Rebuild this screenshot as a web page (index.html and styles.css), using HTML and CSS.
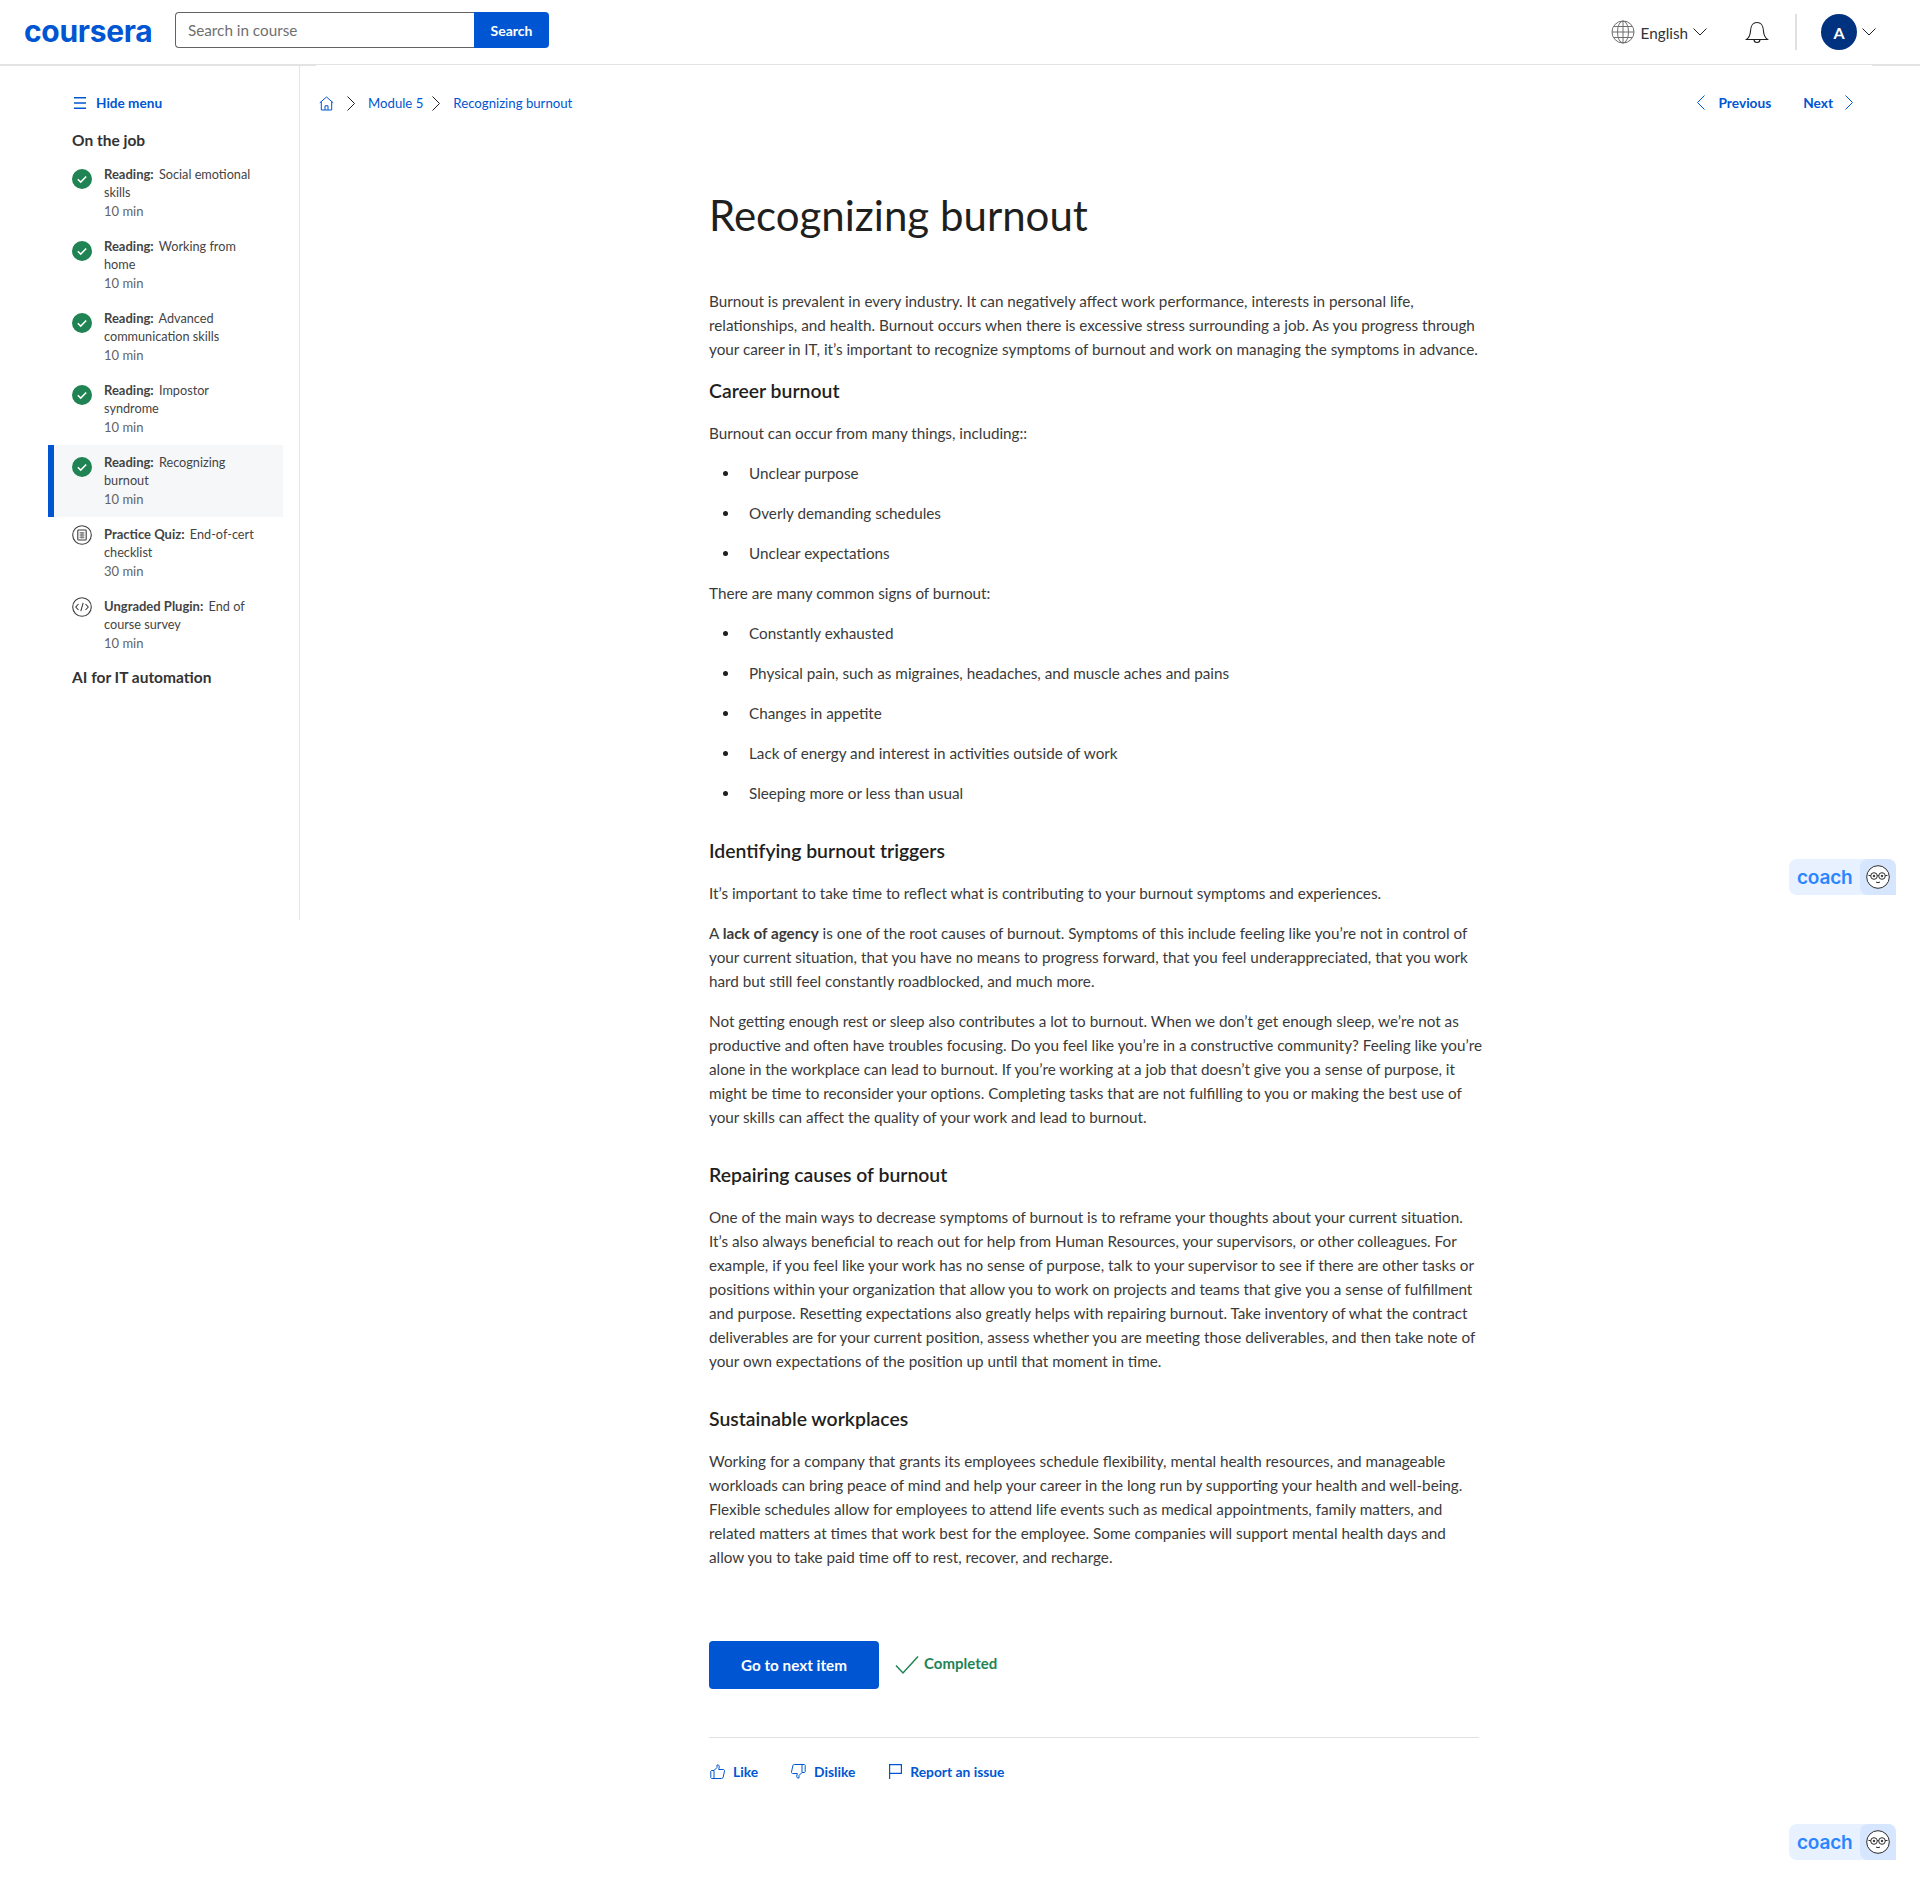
FILE: index.html
```html
<!DOCTYPE html>
<html lang="en">
<head>
    <meta charset="UTF-8">
    <title>Recognizing burnout | Coursera</title>
    <link rel="stylesheet" href="styles.css">
</head>
<body>
    <header class="topbar">
        <a class="logo">coursera</a>
        <div class="search">
            <input class="search-input" type="text" placeholder="Search in course">
            <button class="search-btn">Search</button>
        </div>
        <div class="topbar-right">
            <svg class="globe" width="24" height="24" viewBox="0 0 24 24" fill="none" stroke="#6f6f6f" stroke-width="1">
                <circle cx="12" cy="12" r="11"/>
                <ellipse cx="12" cy="12" rx="5.5" ry="11"/>
                <path d="M12 1v22M1 12h22M2.6 6.5h18.8M2.6 17.5h18.8"/>
            </svg>
            <span class="lang">English</span>
            <svg class="caret" width="14" height="8" viewBox="0 0 14 8" fill="none" stroke="#1f1f1f"><path d="M.5.5 7 7 13.5.5"/></svg>
            <svg class="bell" width="24" height="26" viewBox="0 0 24 26" fill="none" stroke="#1f1f1f" stroke-width="1.1">
                <path d="M1.5 20.5c2.6-2 3.6-4 3.9-7.500.3-3.200.3-9.500 6.600-9.500s6.300 6.300 6.600 9.500c.3 3.500 1.300 5.500 3.900 7.500z"/>
                <path d="M9 20.500a3 3 0 0 0 6 0"/>
            </svg>
            <div class="divider"></div>
            <div class="avatar">A</div>
            <svg class="caret" width="14" height="8" viewBox="0 0 14 8" fill="none" stroke="#1f1f1f"><path d="M.5.5 7 7 13.500.5"/></svg>
        </div>
    </header>

    <div class="page">
        <aside class="sidebar">
            <a class="hide-menu">
                <svg width="12" height="12" viewBox="0 0 12 12" fill="#0056d2"><path d="M0 0h12v1.600H0zM0 5.200h12v1.600H0zM0 10.400h12V12H0z"/></svg>
                <span>Hide menu</span>
            </a>
            <h3 class="side-title">On the job</h3>
            <ul class="items">
                <li class="item">
                    <svg class="item-icon" width="20" height="20" viewBox="0 0 20 20"><circle cx="10" cy="10" r="10" fill="#1f8354"/><path d="M5.800 10.300l2.900 2.800 5.500-5.700" fill="none" stroke="#fff" stroke-width="1.500"/></svg>
                    <div><div class="item-name"><b>Reading:</b> Social emotional<br>skills</div><div class="item-time">10 min</div></div>
                </li>
                <li class="item">
                    <svg class="item-icon" width="20" height="20" viewBox="0 0 20 20"><circle cx="10" cy="10" r="10" fill="#1f8354"/><path d="M5.800 10.300l2.900 2.800 5.500-5.700" fill="none" stroke="#fff" stroke-width="1.500"/></svg>
                    <div><div class="item-name"><b>Reading:</b> Working from<br>home</div><div class="item-time">10 min</div></div>
                </li>
                <li class="item">
                    <svg class="item-icon" width="20" height="20" viewBox="0 0 20 20"><circle cx="10" cy="10" r="10" fill="#1f8354"/><path d="M5.800 10.300l2.900 2.800 5.500-5.700" fill="none" stroke="#fff" stroke-width="1.500"/></svg>
                    <div><div class="item-name"><b>Reading:</b> Advanced<br>communication skills</div><div class="item-time">10 min</div></div>
                </li>
                <li class="item">
                    <svg class="item-icon" width="20" height="20" viewBox="0 0 20 20"><circle cx="10" cy="10" r="10" fill="#1f8354"/><path d="M5.800 10.300l2.900 2.800 5.500-5.700" fill="none" stroke="#fff" stroke-width="1.500"/></svg>
                    <div><div class="item-name"><b>Reading:</b> Impostor<br>syndrome</div><div class="item-time">10 min</div></div>
                </li>
                <li class="item selected">
                    <svg class="item-icon" width="20" height="20" viewBox="0 0 20 20"><circle cx="10" cy="10" r="10" fill="#1f8354"/><path d="M5.800 10.300l2.900 2.800 5.500-5.700" fill="none" stroke="#fff" stroke-width="1.500"/></svg>
                    <div><div class="item-name"><b>Reading:</b> Recognizing<br>burnout</div><div class="item-time">10 min</div></div>
                </li>
                <li class="item">
                    <svg class="item-icon todo" width="20" height="20" viewBox="0 0 20 20" fill="none" stroke="#3d3d3d"><circle cx="10" cy="10" r="9.300" stroke-width="1.100"/><rect x="5.800" y="5" width="8.400" height="10" rx=".8" stroke-width="1.100"/><path d="M7.500 7.800h5M7.500 10h5M7.500 12.300h5M9.200 7v6.500M10.900 7v6.500" stroke="#777" stroke-width="1"/></svg>
                    <div><div class="item-name"><b>Practice Quiz:</b> End-of-cert<br>checklist</div><div class="item-time">30 min</div></div>
                </li>
                <li class="item">
                    <svg class="item-icon todo" width="20" height="20" viewBox="0 0 20 20" fill="none" stroke="#3d3d3d" stroke-width="1.100"><circle cx="10" cy="10" r="9.300"/><path d="M6.500 7 3.800 10l2.700 3M13.500 7l2.700 3-2.700 3M11.200 5.800 8.800 14.200"/></svg>
                    <div><div class="item-name"><b>Ungraded Plugin:</b> End of<br>course survey</div><div class="item-time">10 min</div></div>
                </li>
            </ul>
            <h3 class="side-title next-module">AI for IT automation</h3>
        </aside>

        <main class="content">
            <div class="navrow">
                <nav class="crumbs">
                    <svg width="15" height="15" viewBox="0 0 15 15" fill="none" stroke="#0056d2"><path d="M.8 6.800 7.500 1l6.700 5.800M2.300 5.800V14h10.400V5.800M6 14V9.800h3V14"/></svg>
                    <svg class="chev" width="8" height="15" viewBox="0 0 8 15" fill="none" stroke="#1f1f1f"><path d="M.5.500 7.500 7.500.5 14.500"/></svg>
                    <a>Module 5</a>
                    <svg class="chev chev-mid" width="8" height="15" viewBox="0 0 8 15" fill="none" stroke="#1f1f1f"><path d="M.5.500 7.500 7.500.5 14.500"/></svg>
                    <a>Recognizing burnout</a>
                </nav>
                <div class="prevnext">
                    <svg width="8" height="15" viewBox="0 0 8 15" fill="none" stroke="#0056d2"><path d="M7.500.500.500 7.500l7 7"/></svg>
                    <a class="prev">Previous</a>
                    <a class="next">Next</a>
                    <svg width="8" height="15" viewBox="0 0 8 15" fill="none" stroke="#0056d2"><path d="M.5.500 7.500 7.500.5 14.500"/></svg>
                </div>
            </div>

            <article class="reading">
                <h1>Recognizing burnout</h1>
                <p>Burnout is prevalent in every industry. It can negatively affect work performance, interests in personal life,<br>relationships, and health. Burnout occurs when there is excessive stress surrounding a job. As you progress through<br>your career in IT, it’s important to recognize symptoms of burnout and work on managing the symptoms in advance.</p>
                <h2 class="first">Career burnout</h2>
                <p>Burnout can occur from many things, including::</p>
                <ul>
                    <li>Unclear purpose</li>
                    <li>Overly demanding schedules</li>
                    <li>Unclear expectations</li>
                </ul>
                <p>There are many common signs of burnout:</p>
                <ul>
                    <li>Constantly exhausted</li>
                    <li>Physical pain, such as migraines, headaches, and muscle aches and pains</li>
                    <li>Changes in appetite</li>
                    <li>Lack of energy and interest in activities outside of work</li>
                    <li>Sleeping more or less than usual</li>
                </ul>
                <h2>Identifying burnout triggers</h2>
                <p>It’s important to take time to reflect what is contributing to your burnout symptoms and experiences.</p>
                <p>A <b>lack of agency</b> is one of the root causes of burnout. Symptoms of this include feeling like you’re not in control of<br>your current situation, that you have no means to progress forward, that you feel underappreciated, that you work<br>hard but still feel constantly roadblocked, and much more.</p>
                <p>Not getting enough rest or sleep also contributes a lot to burnout. When we don’t get enough sleep, we’re not as<br>productive and often have troubles focusing. Do you feel like you’re in a constructive community? Feeling like you’re<br>alone in the workplace can lead to burnout. If you’re working at a job that doesn’t give you a sense of purpose, it<br>might be time to reconsider your options. Completing tasks that are not fulfilling to you or making the best use of<br>your skills can affect the quality of your work and lead to burnout.</p>
                <h2>Repairing causes of burnout</h2>
                <p>One of the main ways to decrease symptoms of burnout is to reframe your thoughts about your current situation.<br>It’s also always beneficial to reach out for help from Human Resources, your supervisors, or other colleagues. For<br>example, if you feel like your work has no sense of purpose, talk to your supervisor to see if there are other tasks or<br>positions within your organization that allow you to work on projects and teams that give you a sense of fulfillment<br>and purpose. Resetting expectations also greatly helps with repairing burnout. Take inventory of what the contract<br>deliverables are for your current position, assess whether you are meeting those deliverables, and then take note of<br>your own expectations of the position up until that moment in time.</p>
                <h2>Sustainable workplaces</h2>
                <p>Working for a company that grants its employees schedule flexibility, mental health resources, and manageable<br>workloads can bring peace of mind and help your career in the long run by supporting your health and well-being.<br>Flexible schedules allow for employees to attend life events such as medical appointments, family matters, and<br>related matters at times that work best for the employee. Some companies will support mental health days and<br>allow you to take paid time off to rest, recover, and recharge.</p>

                <div class="actions">
                    <button class="next-btn">Go to next item</button>
                    <svg width="24" height="20" viewBox="0 0 24 20" fill="none" stroke="#1f8354" stroke-width="1.500"><path d="M1 10.500 8 18 23 1.500"/></svg>
                    <span class="completed">Completed</span>
                </div>
                <div class="feedback">
                    <a class="fb-like">
                        <svg width="15" height="15" viewBox="0 0 15 15" fill="none" stroke="#0056d2"><path d="M4 6.500 7 3.500V1c1.500-.5 2.300.5 2.300 1.800L8.700 5.500h4.600c1 0 1.400.8 1.200 1.600l-1.300 6c-.2.800-.7 1.400-1.500 1.400H4zM4 6.500H1.500L.8 7.200v6.500l.8.800H4"/></svg>
                        <span>Like</span>
                    </a>
                    <a class="fb-dislike">
                        <svg width="15" height="15" viewBox="0 0 15 15" fill="none" stroke="#0056d2"><path d="M11 8.500 8 11.500V14c-1.500.5-2.300-.5-2.300-1.800l.6-2.700H1.700C.7 9.500.3 8.700.5 7.900l1.300-6C2 1.100 2.500.5 3.300.5H11zM11 8.500h2.500l.7-.7V1.300l-.8-.8H11"/></svg>
                        <span>Dislike</span>
                    </a>
                    <a class="fb-report">
                        <svg width="13" height="15" viewBox="0 0 13 15" fill="none" stroke="#0056d2" stroke-width="1.200"><path d="M.6 15V.6h11.800v8.800H.6"/></svg>
                        <span>Report an issue</span>
                    </a>
                </div>
            </article>
        </main>
    </div>

    <div class="coach coach-top">
        <span class="coach-word">coach</span>
        <div class="coach-face">
            <svg width="24" height="24" viewBox="0 0 24 24" fill="#fff" stroke="#2b2b2b"><circle cx="12" cy="12" r="11.300"/><circle cx="8" cy="11" r="3.300"/><circle cx="16" cy="11" r="3.300"/><path d="M11.300 10.500h1.400M4.700 10.500H2.500M19.300 10.500h2.200M10 17c1.300.8 2.700.8 4 0" fill="none"/><circle cx="8" cy="11" r=".8" fill="#2b2b2b"/><circle cx="16" cy="11" r=".8" fill="#2b2b2b"/></svg>
        </div>
    </div>
    <div class="coach coach-bottom">
        <span class="coach-word">coach</span>
        <div class="coach-face">
            <svg width="24" height="24" viewBox="0 0 24 24" fill="#fff" stroke="#2b2b2b"><circle cx="12" cy="12" r="11.300"/><circle cx="8" cy="11" r="3.300"/><circle cx="16" cy="11" r="3.300"/><path d="M11.300 10.500h1.400M4.700 10.500H2.500M19.300 10.500h2.200M10 17c1.300.8 2.700.8 4 0" fill="none"/><circle cx="8" cy="11" r=".8" fill="#2b2b2b"/><circle cx="16" cy="11" r=".8" fill="#2b2b2b"/></svg>
        </div>
    </div>
</body>
</html>
```

FILE: styles.css
```css
* {
    box-sizing: border-box;
}
body {
    margin: 0;
    font-family: Lato, "Open Sans", sans-serif;
    font-size: 15.25px;
    color: #3a3a3a;
    background-color: white;
    height: 1884px;
    position: relative;
    overflow: hidden;
}
a {
    color: #0056d2;
}

/* top bar */
.topbar {
    height: 66px;
    border-bottom: 2px solid #e3e3e3;
    display: flex;
    align-items: flex-start;
    padding-left: 24px;
}
.logo {
    font-family: Inter, sans-serif;
    font-weight: 700;
    font-size: 30px;
    letter-spacing: -0.3px;
    line-height: 36px;
    margin-top: 13px;
    width: 151px;
    color: #0056d2;
}
.search {
    display: flex;
    height: 36px;
    margin-top: 12px;
}
.search-input {
    width: 299px;
    height: 36px;
    padding: 0 12px;
    border: 1px solid #636363;
    border-right: none;
    border-radius: 4px 0 0 4px;
    font-family: inherit;
    font-size: 15.25px;
    outline: none;
}
.search-input::placeholder {
    color: #6f6f6f;
}
.search-btn {
    width: 75px;
    height: 36px;
    background-color: #0056d2;
    color: white;
    border: none;
    border-radius: 0 4px 4px 0;
    font-family: inherit;
    font-size: 14px;
    font-weight: 700;
}
.topbar-right {
    margin-left: auto;
    display: flex;
    align-items: center;
    height: 66px;
    padding: 0 44px 2px 0;
}
.lang {
    margin-left: 6px;
    padding-top: 2px;
    color: #333;
}
.caret {
    margin-left: 5px;
}
.bell {
    margin-left: 38px;
}
.divider {
    width: 2px;
    height: 36px;
    background-color: #e1e1e1;
    margin: 0 24px 0 26px;
}
.avatar {
    width: 36px;
    height: 36px;
    border-radius: 50%;
    background-color: #00327f;
    color: white;
    font-weight: 700;
    font-size: 16px;
    display: flex;
    align-items: center;
    justify-content: center;
}

/* page layout */
.page {
    display: flex;
    align-items: flex-start;
}
.sidebar {
    width: 300px;
    height: 854px;
    border-right: 1px solid #e5e5e5;
    padding: 26px 16px 0 48px;
}
.hide-menu {
    display: flex;
    align-items: center;
    gap: 10px;
    margin-left: 26px;
    font-size: 13.6px;
    font-weight: 700;
    line-height: 22px;
}
.side-title {
    font-size: 15.5px;
    line-height: 20px;
    font-weight: 700;
    margin: 16px 0 0 24px;
    color: #333;
}
.items {
    list-style: none;
    margin: 7px 0 0;
    padding: 0;
}
.item {
    display: flex;
    height: 72px;
    padding: 8px 0 8px 24px;
    font-size: 12.7px;
    color: #444;
}
.item b {
    font-size: 13px;
    margin-right: 2px;
}
.item-icon {
    flex: none;
    margin: 4px 12px 0 0;
}
.item-icon.todo {
    margin-top: 0;
}
.item-name {
    line-height: 18px;
}
.item-time {
    line-height: 20px;
    font-size: 13px;
    color: #636363;
}
.item.selected {
    background-color: #f5f7f8;
    border-left: 6px solid #0056d2;
    padding-left: 18px;
}
.next-module {
    margin-top: 6px;
}

/* main column */
.content {
    width: 1556px;
    margin-left: 16px;
    margin-top: -1px;
    background-color: white;
    position: relative;
}
.navrow {
    height: 38px;
    margin-top: 26px;
    display: flex;
    justify-content: space-between;
    font-size: 13.2px;
}
.crumbs,
.prevnext {
    display: flex;
    align-items: center;
    height: 22px;
}
.crumbs {
    margin-top: 1px;
    padding-left: 3px;
}
.chev {
    margin: 0 13px;
}
.chev-mid {
    margin: 0 13px 0 9px;
}
.prevnext {
    padding-right: 19px;
    font-size: 13.7px;
    font-weight: 700;
}
.prev {
    margin: 0 32px 0 14px;
}
.next {
    margin-right: 12px;
}
.reading {
    width: 770px;
    margin-left: 393px;
    padding-top: 58px;
}
h1 {
    font-size: 42px;
    line-height: 56px;
    font-weight: 400;
    color: #1f1f1f;
    margin: 0 0 46px;
}
p {
    margin: 0 0 16px;
    line-height: 24px;
    white-space: nowrap;
}
h2 {
    font-size: 19.4px;
    line-height: 28px;
    font-weight: 600;
    color: #1f1f1f;
    margin: 32px 0 16px;
}
h2.first {
    margin-top: 16px;
}
.reading ul {
    list-style: none;
    margin: 0;
    padding-left: 14px;
}
.reading li {
    display: flex;
    align-items: center;
    line-height: 24px;
    margin-bottom: 16px;
}
.reading li::before {
    content: "";
    width: 5px;
    height: 5px;
    border-radius: 50%;
    background-color: #1f1f1f;
    margin-right: 21px;
}
.actions {
    display: flex;
    align-items: center;
    margin-top: 72px;
}
.next-btn {
    width: 170px;
    height: 48px;
    background-color: #0056d2;
    color: white;
    border: none;
    border-radius: 4px;
    font-family: inherit;
    font-size: 15.25px;
    font-weight: 700;
    margin-right: 16px;
}
.completed {
    margin: 0 0 4px 5px;
    color: #1f8354;
    font-size: 15px;
    font-weight: 700;
}
.feedback {
    margin-top: 48px;
    border-top: 1px solid #e1e1e1;
    padding-top: 22px;
    display: flex;
    font-size: 13.8px;
    font-weight: 700;
}
.feedback a {
    display: flex;
    align-items: center;
    height: 22px;
}
.fb-like svg,
.fb-dislike svg,
.fb-report svg {
    margin-right: 8px;
}
.fb-like {
    margin-left: 1px;
    margin-right: 33px;
}
.fb-dislike {
    margin-right: 34px;
}

/* floating coach button */
.coach {
    position: absolute;
    left: 1789px;
    width: 107px;
    height: 36px;
    display: flex;
    background-color: #e8f1ff;
    border-radius: 8px;
}
.coach-top {
    top: 859px;
}
.coach-bottom {
    top: 1824px;
}
.coach-word {
    flex: 1;
    font-family: Inter, sans-serif;
    font-weight: 600;
    font-size: 19px;
    line-height: 38px;
    letter-spacing: -0.2px;
    color: #2a85ff;
    padding-left: 8px;
}
.coach-face {
    width: 36px;
    background-color: #d6e6ff;
    border-radius: 8px 8px 0 8px;
    display: flex;
    align-items: center;
    justify-content: center;
}
```
